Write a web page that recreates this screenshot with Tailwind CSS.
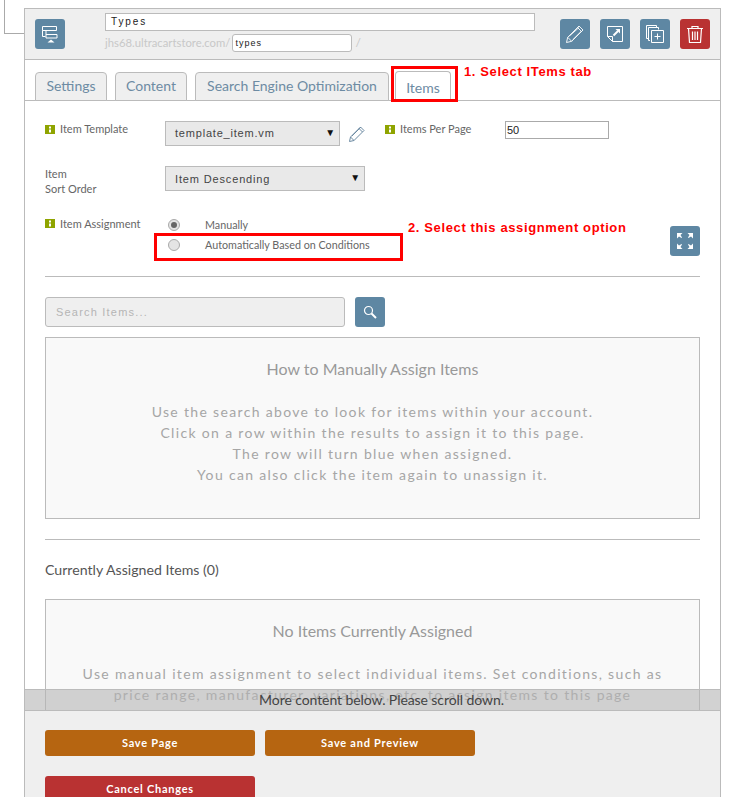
<!DOCTYPE html>
<html><head><meta charset="utf-8"><script src="https://cdn.jsdelivr.net/npm/@tailwindcss/browser@4"></script></head>
<body class="bg-white">
<div class="relative w-[732px] h-[797px] overflow-hidden font-['Lato',sans-serif] text-[#666]">
  <div class="absolute left-[4px] top-0 w-[21px] h-[34px] border-l border-b border-[#aaa]"></div>
  <div class="absolute left-[24px] top-[8px] w-[697px] h-[800px] border border-[#bbb]">
    <div class="h-[51px] bg-[#efefef] border-b border-[#bbb] flex pl-[10px] pr-[10px] relative">
      <div class="mt-[10px] w-[30px] h-[30px] rounded-[3px] bg-[#5e87a3] flex items-center justify-center">
        <svg width="20" height="20" viewBox="0 0 20 20" fill="none" stroke="#fff" stroke-width="1"><path d="M2.500 2.500h14v4h-14zM6 6.500v7.500h11v-3.500h-11M2.500 6.500v6h3"/><path d="M7.500 18.500l3.500-3 3.500 3z" fill="#fff" stroke="none"/></svg>
      </div>
      <div class="ml-[40px] mt-[4px] w-[430px]">
        <div class="h-[18px] border border-[#bbb] bg-white pl-[5px] font-['Liberation_Sans',sans-serif] text-[10px] tracking-[1.900px] leading-[15px] text-[#222]">Types</div>
        <div class="flex items-center mt-[3px] h-[18px] text-[11.300px] text-[#c8c8c8] whitespace-nowrap">
          <span>jhs68.ultracartstore.com/</span>
          <span class="ml-[2px] w-[120px] h-[18px] border border-[#bbb] rounded-[3px] bg-white pl-[2px] font-['Liberation_Sans',sans-serif] text-[9px] tracking-[1px] leading-[16px] text-[#222]">types</span>
          <span class="ml-[3px] text-[12px]">/</span>
        </div>
      </div>
      <div class="ml-auto mt-[10px] flex gap-[10px]">
        <div class="w-[30px] h-[30px] rounded-[3px] bg-[#5e87a3] flex items-center justify-center">
          <svg width="20" height="20" viewBox="0 0 20 20" fill="none" stroke="#fff" stroke-width="0.900"><path d="M1.500 18.500l1.200-5.200L14 2l4 4L6.700 17.300zM2.700 13.300l4 4M12.500 3.500l4 4M4.500 12L14 3.500M8 15.500l8.500-8.500"/></svg>
        </div>
        <div class="w-[30px] h-[30px] rounded-[3px] bg-[#5e87a3] flex items-center justify-center">
          <svg width="18" height="18" viewBox="0 0 18 18" fill="none" stroke="#fff" stroke-width="1"><path d="M1.500 1.500h15v15h-10l-5-5z"/><path d="M1.500 11.500h5v5" /><path d="M7.500 10.500l4.500-4.500" stroke-width="2"/><path d="M9.500 4h4.500v4.500z" fill="#fff" stroke="none"/></svg>
        </div>
        <div class="w-[30px] h-[30px] rounded-[3px] bg-[#5e87a3] flex items-center justify-center">
          <svg width="20" height="20" viewBox="0 0 20 20" fill="none" stroke="#fff" stroke-width="1"><path d="M3 14.500h-1.500v-13h10v1.500"/><path d="M5 16.500h-1.500v-13h10v2"/><path d="M6.500 6.500h12v12h-12z"/><path d="M12.500 9.500v6M9.500 12.500h6"/></svg>
        </div>
        <div class="w-[30px] h-[30px] rounded-[3px] bg-[#b93232] flex items-center justify-center">
          <svg width="20" height="20" viewBox="0 0 20 20" fill="none" stroke="#fff" stroke-width="1.200"><path d="M2 4.500h16M7 4.500V2.500h6v2M3.500 4.500l1 14h11l1-14M7.500 7.500v8.500M10 7.500v8.500M12.500 7.500v8.500"/></svg>
        </div>
      </div>
    </div>

    <div class="h-[41px] border-b border-[#bbb] flex items-end pl-[10px] text-[14px] text-[#6d8ba3]">
      <div class="w-[72px] h-[29px] -mb-px border border-[#bbb] rounded-t-[4px] bg-[#efefef] flex items-center justify-center pb-[2px]">Settings</div>
      <div class="ml-[8px] w-[72px] h-[29px] -mb-px border border-[#bbb] rounded-t-[4px] bg-[#efefef] flex items-center justify-center pb-[2px]">Content</div>
      <div class="ml-[8px] w-[194px] h-[29px] -mb-px border border-[#bbb] rounded-t-[4px] bg-[#efefef] flex items-center justify-center pb-[2px]">Search Engine Optimization</div>
      <div class="ml-[6px] w-[56px] h-[30px] -mb-px border border-b-0 border-[#bbb] rounded-t-[4px] bg-white flex items-center justify-center pt-[2px]">Items</div>
    </div>

    <div class="pl-[20px] pr-[20px] text-[11px]">
      <div class="flex mt-[20px] h-[25px]">
        <div class="w-[120px] flex items-start pt-[1px]">
          <svg class="mt-[3px] shrink-0" width="10" height="9" viewBox="0 0 10 9"><path d="M0 0h10v9H0z" fill="#8fa400"/><path d="M4 1.500h2v2H4zM4 4.500h2v3H4z" fill="#fff"/></svg>
          <span class="ml-[5px] leading-[13px]">Item Template</span>
        </div>
        <div class="w-[175px] h-[25px] border border-[#bbb] bg-[#e9e9e9] flex items-center justify-between pl-[9px] pr-[3px] font-['Liberation_Sans',sans-serif] text-[11px] tracking-[0.800px] text-[#444]"><span>template_item.vm</span><span class="text-[10px] text-[#111] -mt-[2px]">▼</span></div>
        <svg class="ml-[8px] mt-[4px]" width="18" height="18" viewBox="0 0 18 18" fill="none" stroke="#6d8ba3" stroke-width="1"><path d="M1.500 16.500l1-4.500L12.500 2l3.500 3.500L6 15.500zM2.500 12l3.500 3.500M11 3.500l3.500 3.500M4 11l9-9"/></svg>
        <div class="ml-[19px] w-[120px] flex items-start pt-[1px]">
          <svg class="mt-[3px] shrink-0" width="10" height="9" viewBox="0 0 10 9"><path d="M0 0h10v9H0z" fill="#8fa400"/><path d="M4 1.500h2v2H4zM4 4.500h2v3H4z" fill="#fff"/></svg>
          <span class="ml-[5px] leading-[13px]">Items Per Page</span>
        </div>
        <div class="w-[104px] h-[18px] border border-[#aaa] bg-white pl-[1px] font-['Liberation_Sans',sans-serif] text-[11px] leading-[16px] text-[#222]">50</div>
      </div>

      <div class="flex mt-[20px] h-[25px]">
        <div class="w-[120px] leading-[15px]">Item<br>Sort Order</div>
        <div class="w-[200px] h-[25px] border border-[#bbb] bg-[#e9e9e9] flex items-center justify-between pl-[9px] pr-[3px] pt-[1px] font-['Liberation_Sans',sans-serif] text-[11px] tracking-[0.850px] text-[#444]"><span>Item Descending</span><span class="text-[10px] text-[#111] -mt-[4px]">▼</span></div>
      </div>

      <div class="flex mt-[20px] h-[65px] relative">
        <div class="w-[120px] flex items-start pt-[6px]">
          <svg class="mt-[2px] shrink-0" width="10" height="9" viewBox="0 0 10 9"><path d="M0 0h10v9H0z" fill="#8fa400"/><path d="M4 1.500h2v2H4zM4 4.500h2v3H4z" fill="#fff"/></svg>
          <span class="ml-[5px] leading-[13px]">Item Assignment</span>
        </div>
        <div class="pt-[8px] flex flex-col gap-[8px] text-[10.750px]">
          <div class="flex items-center h-[12px]">
            <span class="ml-[3px] -mt-[1px] w-[12px] h-[12px] rounded-full border border-[#aaa] bg-[#e4e4e4] flex items-center justify-center"><span class="w-[6px] h-[6px] rounded-full bg-[#666]"></span></span>
            <span class="ml-[25px]">Manually</span>
          </div>
          <div class="flex items-center h-[12px]">
            <span class="ml-[3px] -mt-[1px] w-[12px] h-[12px] rounded-full border border-[#aaa] bg-[#e4e4e4]"></span>
            <span class="ml-[25px]">Automatically Based on Conditions</span>
          </div>
        </div>
        <div class="absolute right-0 top-[15px] w-[30px] h-[30px] rounded-[3px] bg-[#5e87a3] flex items-center justify-center">
          <svg width="16" height="16" viewBox="0 0 16 16" fill="#fff"><path d="M0 0h5.500L3.500 2 5 4.500 4.500 5 2 3.500 0 5.500zM16 0h-5.500L12.500 2 11 4.500l.5.5L14 3.500l2 2zM0 16h5.500l-2-2L5 11.500 4.500 11 2 12.500 0 10.500zM16 16h-5.500l2-2-1.500-2.500.5-.5 2.500 1.500 2-2z"/></svg>
        </div>
      </div>

      <div class="border-t border-[#bbb]"></div>

      <div class="flex mt-[20px] gap-[10px]">
        <div class="w-[300px] h-[30px] border border-[#bbb] rounded-[3px] bg-[#efefef] pl-[10px] font-['Liberation_Sans',sans-serif] text-[11px] tracking-[1.200px] leading-[28px] text-[#b5b5b5]">Search Items...</div>
        <div class="w-[30px] h-[30px] rounded-[3px] bg-[#5e87a3] flex items-center justify-center">
          <svg width="14" height="14" viewBox="0 0 14 14" fill="none" stroke="#fff"><circle cx="5.500" cy="5.500" r="4" stroke-width="1.200"/><path d="M8.500 8.500l4.500 4.500" stroke-width="2"/></svg>
        </div>
      </div>

      <div class="mt-[10px] h-[182px] border border-[#bbb] bg-[#f9f9f9] text-center text-[#a6a6a6]">
        <div class="mt-[21px] text-[16px] leading-[20px] text-[#999]">How to Manually Assign Items</div>
        <div class="mt-[22px] text-[14px] tracking-[1.330px] leading-[21px]">
          Use the search above to look for items within your account.<br>
          Click on a row within the results to assign it to this page.<br>
          The row will turn blue when assigned.<br>
          You can also click the item again to unassign it.
        </div>
      </div>

      <div class="border-t border-[#bbb] mt-[20px]"></div>
      <div class="mt-[20px] text-[14.150px] leading-[20px] text-[#555]">Currently Assigned Items (0)</div>

      <div class="mt-[19px] h-[180px] border border-[#bbb] bg-[#f9f9f9] text-center text-[#a6a6a6]">
        <div class="mt-[21px] text-[16px] leading-[20px] text-[#999]">No Items Currently Assigned</div>
        <div class="mt-[22px] text-[14px] tracking-[1.330px] leading-[21px]">
          Use manual item assignment to select individual items. Set conditions, such as<br>
          price range, manufacturer, variations, etc. to assign items to this page
        </div>
      </div>
    </div>
  </div>

  <div class="absolute left-[25px] top-[689px] w-[695px] h-[21px] bg-[#b4b4b4]/60 border-t border-[#bbb] pl-[18px] text-center text-[14px] tracking-[-0.080px] leading-[20px] text-[#444]">More content below. Please scroll down.</div>
  <div class="absolute left-[25px] top-[710px] w-[695px] h-[87px] bg-[#efefef] border-t border-[#bbb] pl-[20px] pt-[19px] text-[11px] font-bold tracking-[0.750px] text-white">
    <div class="flex gap-[10px]">
      <div class="w-[210px] h-[26px] rounded-[3px] bg-[#b66511] flex items-center justify-center">Save Page</div>
      <div class="w-[210px] h-[26px] rounded-[3px] bg-[#b66511] flex items-center justify-center">Save and Preview</div>
    </div>
    <div class="mt-[20px] w-[210px] h-[26px] rounded-[3px] bg-[#b93232] flex items-center justify-center">Cancel Changes</div>
  </div>

  <div class="absolute left-[391px] top-[66px] w-[67px] h-[36px] border-[3px] border-[#ff0000]"></div>
  <div class="absolute left-[154px] top-[233px] w-[249px] h-[28px] border-[3px] border-[#ff0000]"></div>
  <div class="absolute left-[464px] top-[62px] font-['Liberation_Sans',sans-serif] font-bold text-[13px] tracking-[0.620px] text-[#ff0000] whitespace-nowrap">1. Select ITems tab</div>
  <div class="absolute left-[408px] top-[218px] font-['Liberation_Sans',sans-serif] font-bold text-[13px] tracking-[0.620px] text-[#ff0000] whitespace-nowrap">2. Select this assignment option</div>
</div>
</body></html>
